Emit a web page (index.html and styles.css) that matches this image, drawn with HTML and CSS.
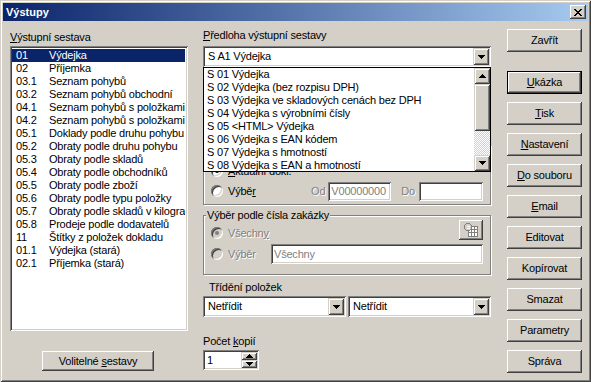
FILE: index.html
```html
<!DOCTYPE html>
<html lang="cs">
<head>
  <meta charset="UTF-8">
  <title>Výstupy</title>
  <link rel="stylesheet" href="styles.css">
</head>
<body>
  <div class="window">
    <div class="titlebar">
      <span class="title">Výstupy</span>
      <button class="close" type="button">
        <svg width="8" height="7" viewBox="0 0 8 7"><path d="M0 0h2l2 2.2L6 0h2L5 3.5 8 7H6L4 4.8 2 7H0l3-3.5z" fill="#000"/></svg>
      </button>
    </div>

    <div class="dialog">
      <!-- seznam sestav -->
      <div class="col-left">
        <label class="lbl"><u>V</u>ýstupní sestava</label>
        <ul class="listbox">
          <li class="sel"><span class="num">01</span>Výdejka</li>
          <li><span class="num">02</span>Příjemka</li>
          <li><span class="num">03.1</span>Seznam pohybů</li>
          <li><span class="num">03.2</span>Seznam pohybů obchodní</li>
          <li><span class="num">04.1</span>Seznam pohybů s položkami</li>
          <li><span class="num">04.2</span>Seznam pohybů s položkami</li>
          <li><span class="num">05.1</span>Doklady podle druhu pohybu</li>
          <li><span class="num">05.2</span>Obraty podle druhu pohybu</li>
          <li><span class="num">05.3</span>Obraty podle skladů</li>
          <li><span class="num">05.4</span>Obraty podle obchodníků</li>
          <li><span class="num">05.5</span>Obraty podle zboží</li>
          <li><span class="num">05.6</span>Obraty podle typu položky</li>
          <li><span class="num">05.7</span>Obraty podle skladů v kilogra</li>
          <li><span class="num">05.8</span>Prodeje podle dodavatelů</li>
          <li><span class="num">11</span>Štítky z položek dokladu</li>
          <li><span class="num">01.1</span>Výdejka (stará)</li>
          <li><span class="num">02.1</span>Příjemka (stará)</li>
        </ul>
        <button class="btn btn-custom" type="button">Volitelné <u>s</u>estavy</button>
      </div>

      <!-- předloha a parametry -->
      <div class="col-mid">
        <label class="lbl"><u>P</u>ředloha výstupní sestavy</label>
        <div class="combo combo-main">
          <span class="combo-text">S A1 Výdejka</span>
          <span class="combo-btn">
            <svg width="7" height="4"><path d="M0 0h7v1H0zM1 1h5v1H1zM2 2h3v1H2zM3 3h1v1H3z"/></svg>
          </span>
          <div class="dropdown">
            <ul class="drop-items">
              <li>S 01 Výdejka</li>
              <li>S 02 Výdejka (bez rozpisu DPH)</li>
              <li>S 03 Výdejka ve skladových cenách bez DPH</li>
              <li>S 04 Výdejka s výrobními čísly</li>
              <li>S 05 &lt;HTML&gt; Výdejka</li>
              <li>S 06 Výdejka s EAN kódem</li>
              <li>S 07 Výdejka s hmotností</li>
              <li>S 08 Výdejka s EAN a hmotností</li>
            </ul>
            <div class="scrollbar">
              <span class="sb-btn">
                <svg width="7" height="4"><path d="M3 0h1v1H3zM2 1h3v1H2zM1 2h5v1H1zM0 3h7v1H0z"/></svg>
              </span>
              <span class="sb-thumb"></span>
              <span class="sb-track"></span>
              <span class="sb-btn">
                <svg width="7" height="4"><path d="M0 0h7v1H0zM1 1h5v1H1zM2 2h3v1H2zM3 3h1v1H3z"/></svg>
              </span>
            </div>
          </div>
        </div>

        <!-- horní část skupiny je schovaná pod rozbaleným seznamem -->
        <fieldset class="group group-range">
          <div class="opt-row opt-hidden"><span class="radio checked"></span><span><u>A</u>ktuální dokl.</span></div>
          <div class="opt-row">
            <span class="radio"></span><span>Výbě<u>r</u></span>
            <span class="range">
              <span class="dim">Od</span>
              <input class="field field-from" type="text" value="V00000000" readonly>
              <span class="dim">Do</span>
              <input class="field field-to" type="text" value="" readonly>
            </span>
          </div>
        </fieldset>

        <fieldset class="group group-order">
          <legend>Výběr podle čísla zakázky</legend>
          <div class="opt-row opt-first">
            <span class="radio checked disabled"></span><span class="dim">Všechn<u>y</u></span>
            <button class="icon-btn" type="button">
              <svg width="16" height="16" viewBox="0 0 16 16">
                <rect x="5.5" y="4.5" width="9" height="10" fill="#fff" stroke="#808080"/>
                <path d="M5.5 7.5h9M5.5 10.5h9M8.5 4.5v10M11.5 4.5v10" stroke="#808080"/>
                <circle cx="5" cy="5" r="3.5" fill="#d4d0c8" stroke="#808080"/>
                <path d="M3.5 4h3M3.5 6h3" stroke="#fff"/>
              </svg>
            </button>
          </div>
          <div class="opt-row opt-second">
            <span class="radio disabled"></span><span class="dim">Výběr</span>
            <input class="field field-order" type="text" value="Všechny" readonly>
          </div>
        </fieldset>

        <label class="lbl lbl-sort">Třídění položek</label>
        <div class="sort-row">
          <div class="combo">
            <span class="combo-text">Netřídit</span>
            <span class="combo-btn">
              <svg width="7" height="4"><path d="M0 0h7v1H0zM1 1h5v1H1zM2 2h3v1H2zM3 3h1v1H3z"/></svg>
            </span>
          </div>
          <div class="combo">
            <span class="combo-text">Netřídit</span>
            <span class="combo-btn">
              <svg width="7" height="4"><path d="M0 0h7v1H0zM1 1h5v1H1zM2 2h3v1H2zM3 3h1v1H3z"/></svg>
            </span>
          </div>
        </div>

        <label class="lbl lbl-copies">Počet <u>k</u>opií</label>
        <div class="spinner">
          <span class="spin-text">1</span>
          <span class="spin-btns">
            <span class="spin-btn">
              <svg width="7" height="4"><path d="M3 0h1v1H3zM2 1h3v1H2zM1 2h5v1H1zM0 3h7v1H0z"/></svg>
            </span>
            <span class="spin-btn">
              <svg width="7" height="4"><path d="M0 0h7v1H0zM1 1h5v1H1zM2 2h3v1H2zM3 3h1v1H3z"/></svg>
            </span>
          </span>
        </div>
      </div>

      <!-- tlačítka -->
      <div class="col-right">
        <button class="btn" type="button">Zavřít</button>
        <button class="btn btn-default" type="button"><u>U</u>kázka</button>
        <button class="btn" type="button"><u>T</u>isk</button>
        <button class="btn" type="button"><u>N</u>astavení</button>
        <button class="btn" type="button"><u>D</u>o souboru</button>
        <button class="btn" type="button"><u>E</u>mail</button>
        <button class="btn" type="button">Editovat</button>
        <button class="btn" type="button">Kopírovat</button>
        <button class="btn" type="button">Smazat</button>
        <button class="btn" type="button">Parametry</button>
        <button class="btn" type="button">Správa</button>
      </div>
    </div>
  </div>
</body>
</html>
```

FILE: styles.css
```css
/* Basic reset */
* {
  margin: 0;
  padding: 0;
  box-sizing: border-box;
}
body {
  font-family: 'Liberation Sans', Arial, sans-serif;
  font-size: 11px;
  line-height: 13px;
  letter-spacing: -0.2px;
  color: #000;
  background-color: #d4d0c8;
}
u {
  text-decoration: underline;
  text-underline-offset: 1px;
}
svg {
  display: block;
  shape-rendering: crispEdges;
}

/* okno */
.window {
  width: 591px;
  height: 382px;
  padding: 3px;
  background-color: #d4d0c8;
  box-shadow: inset 1px 1px #d4d0c8, inset -1px -1px #404040, inset 2px 2px #fff, inset -2px -2px #808080;
}
.titlebar {
  height: 18px;
  display: flex;
  align-items: center;
  padding: 0 2px 0 3px;
  background: linear-gradient(to right, #0a246a, #a6caf0);
  color: #fff;
  font-weight: bold;
  letter-spacing: 0;
}
.title {
  flex: 1;
}
.close {
  width: 16px;
  height: 14px;
  display: flex;
  align-items: center;
  justify-content: center;
  border: none;
  background-color: #d4d0c8;
  box-shadow: inset -1px -1px #404040, inset 1px 1px #fff, inset -2px -2px #808080;
}

.dialog {
  display: flex;
  padding: 0 6px 0 7px;
}

/* levý sloupec */
.col-left {
  width: 178px;
  padding-top: 10px;
}
.lbl {
  display: block;
  height: 13px;
}
.listbox {
  list-style: none;
  height: 285px;
  margin-top: 2px;
  padding: 3px 2px 2px;
  background-color: #fff;
  box-shadow: inset 1px 1px #808080, inset -1px -1px #fff, inset 2px 2px #404040, inset -2px -2px #d4d0c8;
  overflow: hidden;
}
.listbox li {
  height: 13px;
  display: flex;
  padding-left: 4px;
  margin-right: 1px;
  white-space: nowrap;
  overflow: hidden;
}
.listbox .num {
  width: 33px;
  flex-shrink: 0;
}
.listbox li.sel {
  background-color: #0a246a;
  color: #fff;
}

/* tlačítka */
.btn {
  display: block;
  width: 75px;
  height: 23px;
  border: none;
  font: inherit;
  letter-spacing: inherit;
  color: #000;
  background-color: #d4d0c8;
  box-shadow: inset -1px -1px #404040, inset 1px 1px #fff, inset -2px -2px #808080;
}
.btn-custom {
  width: 112px;
  height: 20px;
  margin: 20px 0 0 32px;
}
.btn-default {
  box-shadow: inset 0 0 0 1px #000, inset -2px -2px #404040, inset 2px 2px #fff, inset -3px -3px #808080;
}

/* prostřední sloupec */
.col-mid {
  width: 288px;
  margin-left: 15px;
  padding-top: 8px;
}
.combo {
  position: relative;
  height: 21px;
  display: flex;
  padding: 2px;
  background-color: #fff;
  box-shadow: inset 1px 1px #808080, inset -1px -1px #fff, inset 2px 2px #404040, inset -2px -2px #d4d0c8;
}
.combo-main {
  margin-top: 4px;
}
.combo-text {
  flex: 1;
  padding-left: 3px;
  line-height: 17px;
  white-space: nowrap;
}
.combo-btn,
.sb-btn,
.spin-btn {
  display: flex;
  align-items: center;
  justify-content: center;
  background-color: #d4d0c8;
  box-shadow: inset 1px 1px #d4d0c8, inset -1px -1px #404040, inset 2px 2px #fff, inset -2px -2px #808080;
}
.combo-btn {
  width: 16px;
  height: 17px;
}

.dropdown {
  position: absolute;
  top: 21px;
  left: 0;
  z-index: 2;
  width: 288px;
  height: 105px;
  display: flex;
  border: 1px solid #000;
  background-color: #fff;
}
.drop-items {
  flex: 1;
  list-style: none;
}
.drop-items li {
  height: 13px;
  padding-left: 3px;
  white-space: nowrap;
}
.scrollbar {
  width: 16px;
  display: flex;
  flex-direction: column;
}
.sb-btn {
  height: 16px;
}
.sb-thumb {
  height: 47px;
  background-color: #d4d0c8;
  box-shadow: inset 1px 1px #d4d0c8, inset -1px -1px #404040, inset 2px 2px #fff, inset -2px -2px #808080;
}
.sb-track {
  flex: 1;
  background: repeating-conic-gradient(#fff 0 25%, #d4d0c8 0 50%) 0 0 / 2px 2px;
}

/* skupiny */
.group {
  border: 1px solid #808080;
  box-shadow: 1px 1px 0 #fff, inset 1px 1px 0 #fff;
  padding: 2px 7px 3px 2px;
  min-width: 0;
}
.group legend {
  padding: 0 1px;
  height: 13px;
  background-color: #d4d0c8;
}
.group-range {
  margin-top: 78px;
  padding-top: 15px;
}
.group-order {
  margin-top: 4px;
  padding-bottom: 10px;
}
.opt-row {
  height: 20px;
  display: flex;
  align-items: center;
  padding-left: 5px;
  white-space: nowrap;
}
.opt-first {
  height: 18px;
}
.opt-second {
  margin-top: 2px;
}
.radio {
  position: relative;
  width: 12px;
  height: 12px;
  margin-right: 5px;
  flex-shrink: 0;
  border-radius: 50%;
  background-color: #fff;
  box-shadow: inset 1px 1px #808080, inset -1px -1px #fff, inset 2px 2px #404040, inset -2px -2px #d4d0c8;
}
.radio.disabled {
  background-color: #d4d0c8;
}
.radio.checked::after {
  content: '';
  position: absolute;
  left: 4px;
  top: 4px;
  width: 4px;
  height: 4px;
  border-radius: 50%;
  background-color: #000;
}
.radio.disabled.checked::after {
  background-color: #808080;
}
.dim {
  color: #808080;
  text-shadow: 1px 1px 0 #fff;
}
.range {
  display: flex;
  align-items: center;
  margin-left: auto;
}
.field {
  height: 19px;
  padding: 0 3px;
  border: none;
  outline: none;
  font: inherit;
  letter-spacing: inherit;
  color: #808080;
  background-color: #fff;
  box-shadow: inset 1px 1px #808080, inset -1px -1px #fff, inset 2px 2px #404040, inset -2px -2px #d4d0c8;
}
.field-from {
  width: 63px;
  margin: 0 10px 0 3px;
}
.field-to {
  width: 64px;
  margin-left: 4px;
}
.field-order {
  width: 212px;
  height: 20px;
  margin-left: auto;
}
.icon-btn {
  width: 24px;
  height: 20px;
  margin: -4px 0 0 auto;
  align-self: flex-start;
  display: flex;
  align-items: center;
  justify-content: center;
  border: none;
  background-color: #d4d0c8;
  box-shadow: inset -1px -1px #404040, inset 1px 1px #fff, inset -2px -2px #808080;
}

.lbl-sort {
  margin-top: 6px;
  padding-left: 6px;
}
.sort-row {
  display: flex;
  gap: 2px;
  margin-top: 2px;
}
.sort-row .combo {
  width: 143px;
}
.lbl-copies {
  margin-top: 18px;
}
.spinner {
  width: 56px;
  height: 20px;
  margin-top: 2px;
  display: flex;
  padding: 2px;
  background-color: #fff;
  box-shadow: inset 1px 1px #808080, inset -1px -1px #fff, inset 2px 2px #404040, inset -2px -2px #d4d0c8;
}
.spin-text {
  flex: 1;
  padding-left: 2px;
  line-height: 16px;
}
.spin-btns {
  width: 16px;
  display: flex;
  flex-direction: column;
}
.spin-btn {
  flex: 1;
}

/* pravý sloupec */
.col-right {
  width: 75px;
  margin-left: 16px;
  padding-top: 8px;
}
.col-right .btn + .btn {
  margin-top: 8px;
}
.col-right .btn-default {
  margin-top: 19px !important;
}
```
